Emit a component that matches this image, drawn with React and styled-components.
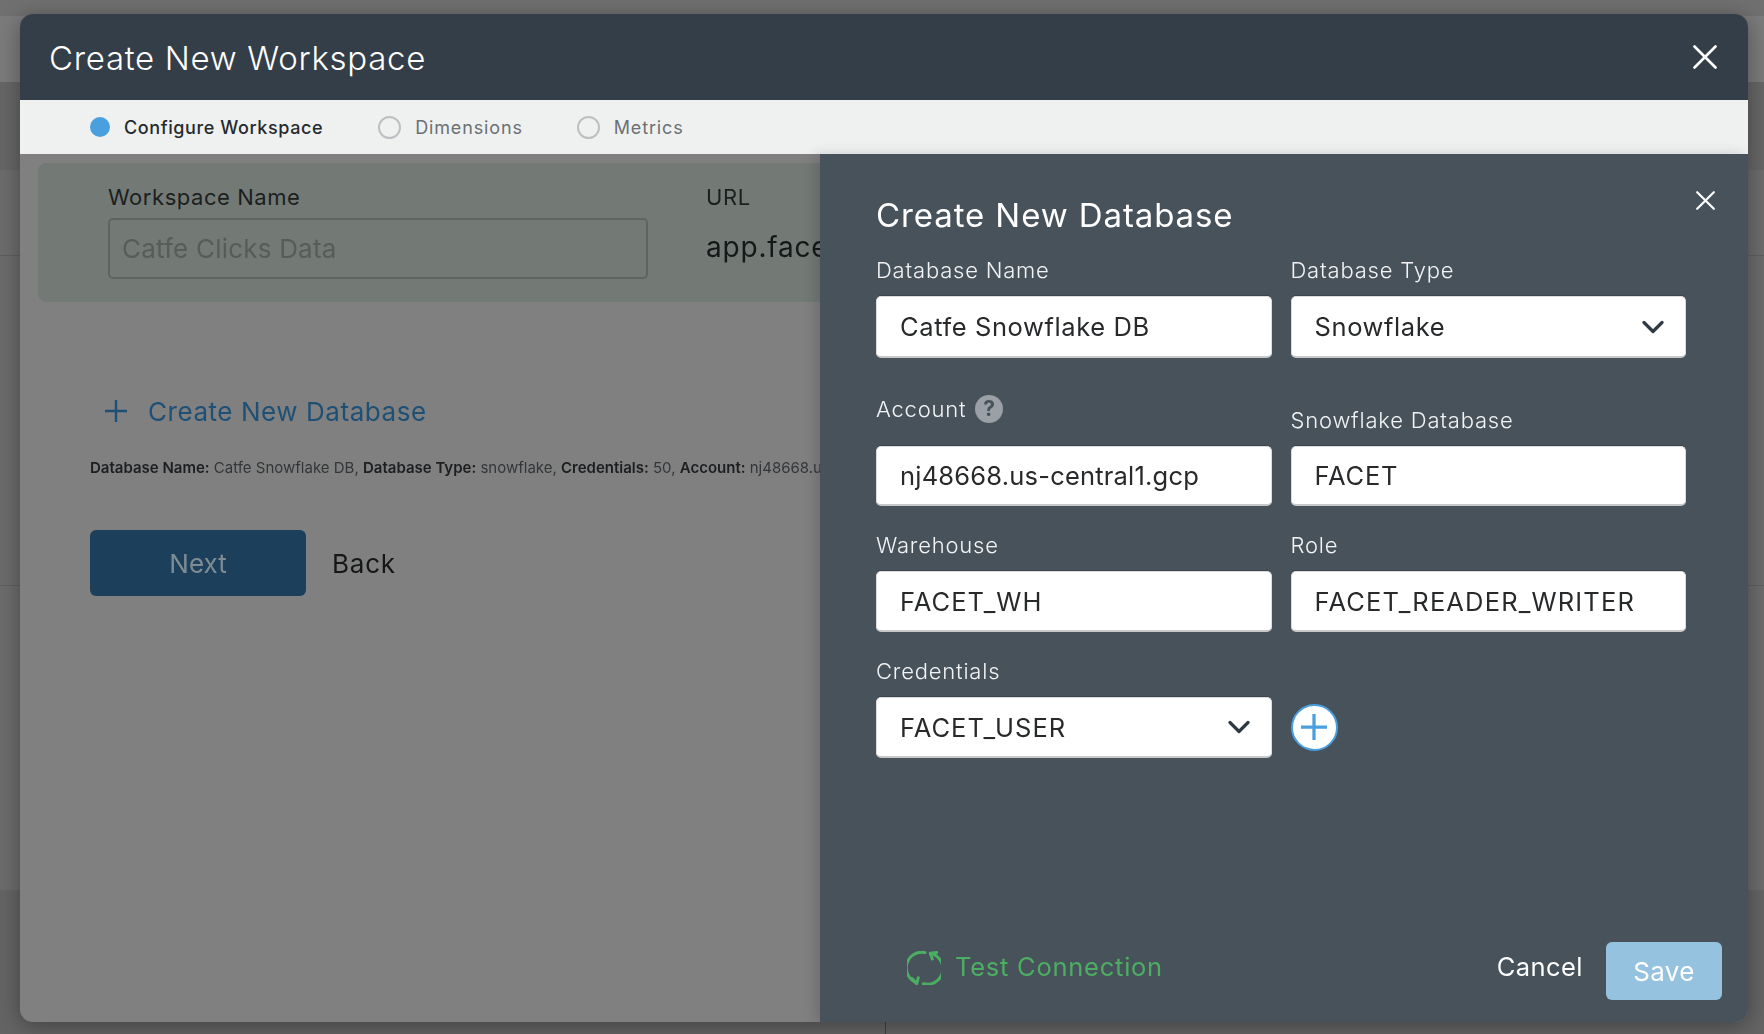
import React from 'react';
import styled, {createGlobalStyle} from 'styled-components';

const GlobalStyle = createGlobalStyle`
  html, body {
    margin: 0;
    height: 100%;
    background: #6b6b6b;
    overflow: hidden;
  }
  * {
    box-sizing: border-box;
  }
  body {
    font-family: Inter, "Noto Sans", "Liberation Sans", sans-serif;
  }
`

const Page = styled.div`
  height: 1034px;
  display: flex;
  flex-direction: column;
`
const Band = styled.div`
  height: ${p => p.$h}px;
  background: ${p => p.$bg};
  border-bottom: ${p => p.$line ? '1px solid #5f5f5f' : 'none'};
`
const LastBand = styled.div`
  flex: 1;
  background: linear-gradient(to right, #646464 885px, #3f3f3f 885px, #3f3f3f 886px, #646464 886px);
`

const Modal = styled.div`
  position: fixed;
  left: 20px;
  top: 14px;
  width: 1728px;
  height: 1008px;
  border-radius: 13px;
  background: #808080;
  box-shadow: 0 4px 22px rgba(0, 0, 0, 0.35);
  display: flex;
  flex-direction: column;
  overflow: hidden;
`
const ModalHeader = styled.div`
  height: 86px;
  flex: none;
  background: #343e48;
  color: #fff;
  padding: 0 31px 0 29px;
  display: flex;
  align-items: center;
  justify-content: space-between;
`
const ModalTitle = styled.div`
  font-size: 33px;
  font-weight: 300;
  letter-spacing: 0.7px;
  padding-top: 2px;
`
const CloseIcon = ({size, width}) => (
  <svg width={size} height={size} viewBox="0 0 24 24" fill="none" stroke="#fff" strokeWidth={width} strokeLinecap="round">
    <path d="M1.5 1.5 L22.5 22.5 M22.5 1.5 L1.5 22.5"/>
  </svg>
)
const Steps = styled.div`
  height: 54px;
  flex: none;
  background: #eff1f0;
  padding-left: 70px;
  display: flex;
  align-items: center;
`
const Step = styled.div`
  display: flex;
  align-items: center;
  gap: 14px;
  margin-right: ${p => p.$active ? 55 : 54}px;
  font-size: 18px;
  font-weight: ${p => p.$active ? 500 : 400};
  letter-spacing: ${p => p.$active ? 0.6 : 0.85}px;
  color: ${p => p.$active ? '#262a2e' : '#6b7074'};
`
const StepDot = styled.span`
  width: ${p => p.$active ? 20 : 23}px;
  height: ${p => p.$active ? 20 : 23}px;
  border-radius: 50%;
  background: ${p => p.$active ? '#4a9fdf' : 'transparent'};
  border: ${p => p.$active ? 'none' : '2px solid #bcc0c2'};
`

const Body = styled.div`
  flex: 1;
  position: relative;
  padding: 9px 0 0 18px;
`
const NameBox = styled.div`
  height: 139px;
  background: #737a75;
  border-radius: 8px;
  padding: 20px 0 0 70px;
  display: flex;
`
const NameField = styled.div`
  width: 540px;
  margin-right: 58px;
`
const BoxLabel = styled.div`
  font-size: 22px;
  line-height: 28px;
  letter-spacing: 0.55px;
  color: #1c1f20;
  margin-bottom: 7px;
`
const NameInput = styled.input`
  width: 100%;
  height: 61px;
  border: 2px solid #5f6461;
  border-radius: 5px;
  background: transparent;
  padding: 0 12px;
  font: 400 26px Inter, sans-serif;
  letter-spacing: 0.2px;
  outline: none;
  &::placeholder {
    color: #565c59;
    opacity: 1;
  }
`
const UrlValue = styled.div`
  font-size: 28px;
  line-height: 36px;
  letter-spacing: 0.8px;
  color: #151718;
  margin-top: 18px;
  white-space: nowrap;
`
const Main = styled.div`
  padding: 89px 0 0 52px;
`
const AddLink = styled.div`
  display: flex;
  align-items: center;
  gap: 21px;
  margin-left: 15px;
  height: 40px;
  font-size: 26px;
  letter-spacing: 0.55px;
  color: #1e4f75;
`
const Summary = styled.div`
  margin-top: 27px;
  font-size: 15px;
  line-height: 20px;
  white-space: nowrap;
  color: #333638;
  b {
    font-weight: 600;
    color: #1c1e20;
  }
`
const Actions = styled.div`
  margin-top: 52px;
  display: flex;
  align-items: center;
  gap: 26px;
`
const NextButton = styled.div`
  width: 216px;
  height: 66px;
  background: #1c405c;
  border-radius: 6px;
  color: #7f8b93;
  font-size: 26px;
  display: flex;
  align-items: center;
  justify-content: center;
`
const BackButton = styled.div`
  font-size: 26px;
  letter-spacing: 0.8px;
  color: #141618;
`

const Panel = styled.div`
  position: absolute;
  left: 800px;
  top: 0;
  right: 0;
  bottom: 0;
  background: #48525b;
  box-shadow: -5px 0 12px rgba(0, 0, 0, 0.14);
  padding: 41px 26px 22px 56px;
  color: #fff;
  display: flex;
  flex-direction: column;
`
const PanelClose = styled.div`
  position: absolute;
  right: 33px;
  top: 37px;
  display: flex;
`
const PanelTitle = styled.div`
  font-size: 33px;
  line-height: 40px;
  font-weight: 400;
  letter-spacing: 0.9px;
  margin-bottom: 23px;
`
const Form = styled.div`
  width: 810px;
  display: grid;
  grid-template-columns: 395.5px 395.5px;
  column-gap: 19px;
  row-gap: 27px;
  align-items: end;
`
const Field = styled.div`
  display: flex;
  flex-direction: column;
  margin-top: ${p => p.$top || 0}px;
`
const Label = styled.div`
  display: flex;
  align-items: center;
  gap: 9px;
  height: 24px;
  padding-bottom: 1px;
  margin-bottom: ${p => p.$gap || 14}px;
  font-size: 22px;
  letter-spacing: 0.8px;
  color: #f1f3f4;
  font-weight: 300;
`
const Help = styled.span`
  width: 28px;
  height: 28px;
  flex: none;
  border-radius: 50%;
  background: #9aa0a5;
  color: #48525b;
  font-size: 21px;
  font-weight: 700;
  display: flex;
  align-items: center;
  justify-content: center;
`
const Input = styled.input`
  width: 100%;
  height: ${p => p.$h || 61}px;
  background: #fff;
  border: 1px solid #dcdcdc;
  border-bottom: 2px solid #c6c8ca;
  border-radius: 5px;
  box-shadow: 0 -1px 0 #3b444c;
  padding: 0 24px 0 23px;
  font: 400 25.5px Inter, sans-serif;
  letter-spacing: ${p => p.$ls ?? 0.6}px;
  color: #27292b;
  outline: none;
`
const Select = styled.div`
  width: 100%;
  height: ${p => p.$h || 61}px;
  background: #fff;
  border: 1px solid #dcdcdc;
  border-bottom: 2px solid #c6c8ca;
  border-radius: 5px;
  box-shadow: 0 -1px 0 #3b444c;
  padding: 0 21px 0 23px;
  font-size: 25.5px;
  letter-spacing: ${p => p.$ls ?? 0.6}px;
  color: #27292b;
  display: flex;
  align-items: center;
  justify-content: space-between;
`
const Chevron = () => (
  <svg width="22" height="14" viewBox="0 0 22 14" fill="none" stroke="#2f3a44" strokeWidth="3.2" strokeLinecap="round" strokeLinejoin="round">
    <path d="M2 2.5 L11 11.5 L20 2.5"/>
  </svg>
)
const CredRow = styled.div`
  display: grid;
  grid-template-columns: 395.5px 46px;
  column-gap: 19px;
  grid-column: 1 / span 2;
  align-items: center;
`
const AddCircle = styled.div`
  width: 47px;
  height: 47px;
  border-radius: 50%;
  background: #fff;
  border: 2px solid #4a9fdf;
  display: flex;
  align-items: center;
  justify-content: center;
  margin-top: 37px;
`
const Footer = styled.div`
  margin-top: auto;
  display: flex;
  align-items: flex-end;
  padding-left: 31px;
`
const TestConnection = styled.div`
  display: flex;
  align-items: center;
  gap: 14px;
  height: 34px;
  margin-bottom: 15px;
  font-size: 25.5px;
  letter-spacing: 0.75px;
  color: #4cae63;
`
const TestLabel = styled.span`
  padding-bottom: 3px;
`
const Cancel = styled.div`
  margin-left: auto;
  margin-right: 23px;
  margin-bottom: 18px;
  line-height: 30px;
  font-size: 25.5px;
  letter-spacing: 0.45px;
  color: #fff;
`
const SaveButton = styled.div`
  width: 116px;
  height: 58px;
  background: #95c2de;
  border-radius: 6px;
  color: #fff;
  font-size: 26px;
  letter-spacing: 0.3px;
  display: flex;
  align-items: center;
  justify-content: center;
`

const RefreshIcon = () => (
  <svg width="34" height="34" viewBox="0 0 34 34" fill="none" stroke="#4cae63" strokeWidth="3" strokeLinecap="round" strokeLinejoin="round">
    <path d="M18 1.6 A15.6 15.6 0 0 0 9.7 31.6"/>
    <path d="M4.7 27.3 L9.7 32.6 L11.3 26.7"/>
    <path d="M16.3 32.8 A15.6 15.6 0 0 0 24.2 2.6"/>
    <path d="M29.7 1.6 L23.2 2.3 L25.3 8"/>
  </svg>
)
const PlusIcon = ({size, color, width}) => (
  <svg width={size} height={size} viewBox="0 0 24 24" fill="none" stroke={color} strokeWidth={width}>
    <path d="M12 0 V24 M0 12 H24"/>
  </svg>
)

export default function App() {
  return (
    <>
      <GlobalStyle/>
      <Page>
        <Band $h={16} $bg="#707070"/>
        <Band $h={66} $bg="#7b7b7b"/>
        <Band $h={88} $bg="#666666"/>
        <Band $h={86} $bg="#6c6c6c" $line/>
        <Band $h={330} $bg="#6b6b6b" $line/>
        <Band $h={304} $bg="#6c6c6c"/>
        <LastBand/>
      </Page>
      <Modal>
        <ModalHeader>
          <ModalTitle>Create New Workspace</ModalTitle>
          <CloseIcon size={24} width={2.6}/>
        </ModalHeader>
        <Steps>
          <Step $active><StepDot $active/>Configure Workspace</Step>
          <Step><StepDot/>Dimensions</Step>
          <Step><StepDot/>Metrics</Step>
        </Steps>
        <Body>
          <NameBox>
            <NameField>
              <BoxLabel>Workspace Name</BoxLabel>
              <NameInput readOnly placeholder="Catfe Clicks Data"/>
            </NameField>
            <div>
              <BoxLabel>URL</BoxLabel>
              <UrlValue>app.facet.run</UrlValue>
            </div>
          </NameBox>
          <Main>
            <AddLink>
              <PlusIcon size={22} color="#1e4f75" width={2.6}/>
              Create New Database
            </AddLink>
            <Summary>
              <b>Database Name:</b> Catfe Snowflake DB, <b>Database Type:</b> snowflake, <b>Credentials:</b> 50, <b>Account:</b> nj48668.us-central1.gcp
            </Summary>
            <Actions>
              <NextButton>Next</NextButton>
              <BackButton>Back</BackButton>
            </Actions>
          </Main>
          <Panel>
            <PanelClose><CloseIcon size={19} width={2.8}/></PanelClose>
            <PanelTitle>Create New Database</PanelTitle>
            <Form>
              <Field>
                <Label>Database Name</Label>
                <Input readOnly $h={62} defaultValue="Catfe Snowflake DB"/>
              </Field>
              <Field>
                <Label>Database Type</Label>
                <Select $h={62}>Snowflake<Chevron/></Select>
              </Field>
              <Field $top={12}>
                <Label $gap={25}>Account<Help>?</Help></Label>
                <Input readOnly $h={60} $ls={0.2} defaultValue="nj48668.us-central1.gcp"/>
              </Field>
              <Field>
                <Label>Snowflake Database</Label>
                <Input readOnly $h={60} $ls={0.8} defaultValue="FACET"/>
              </Field>
              <Field>
                <Label>Warehouse</Label>
                <Input readOnly $ls={1.05} defaultValue="FACET_WH"/>
              </Field>
              <Field>
                <Label>Role</Label>
                <Input readOnly $ls={1.15} defaultValue="FACET_READER_WRITER"/>
              </Field>
              <CredRow>
                <Field>
                  <Label>Credentials</Label>
                  <Select $ls={1}>FACET_USER<Chevron/></Select>
                </Field>
                <AddCircle><PlusIcon size={26} color="#4a9fdf" width={3}/></AddCircle>
              </CredRow>
            </Form>
            <Footer>
              <TestConnection><RefreshIcon/><TestLabel>Test Connection</TestLabel></TestConnection>
              <Cancel>Cancel</Cancel>
              <SaveButton>Save</SaveButton>
            </Footer>
          </Panel>
        </Body>
      </Modal>
    </>
  )
}
